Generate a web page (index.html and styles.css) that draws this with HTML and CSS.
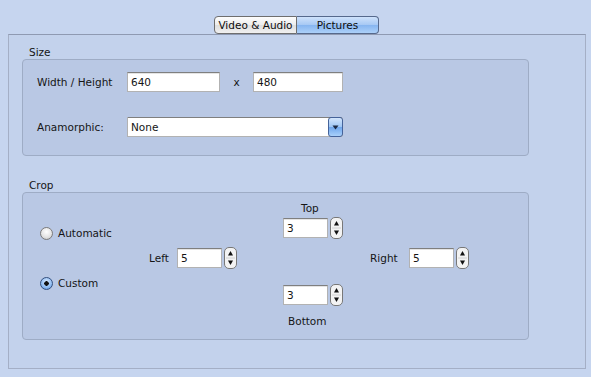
FILE: index.html
```html
<!DOCTYPE html>
<html lang="en">
<head>
    <meta charset="UTF-8">
    <title>Pictures</title>
    <link rel="stylesheet" href="styles.css">
</head>
<body>
    <div class="tabs">
        <span class="tab">Video &amp; Audio</span>
        <span class="tab active">Pictures</span>
    </div>

    <div class="panel">
        <div class="group-label">Size</div>
        <div class="group size">
            <div class="row">
                <span class="label">Width / Height</span>
                <input class="field width" type="text" value="640">
                <span class="times">x</span>
                <input class="field height" type="text" value="480">
            </div>
            <div class="row anamorphic">
                <span class="label">Anamorphic:</span>
                <div class="popup">
                    <span class="popup-text">None</span>
                    <span class="popup-btn">
                        <svg width="7" height="5" viewBox="0 0 7 5"><path d="M0.5 0.5 H6.5 L3.5 4.5 Z" fill="#1b2a45"/></svg>
                    </span>
                </div>
            </div>
        </div>

        <div class="group-label crop-label">Crop</div>
        <div class="group crop">
            <div class="radios">
                <div class="radio-row"><span class="radio"></span>Automatic</div>
                <div class="radio-row custom"><span class="radio on"></span>Custom</div>
            </div>

            <div class="sides">
                <div class="cell top">
                    <span class="side-label">Top</span>
                    <div class="spinner">
                        <input class="field num" type="text" value="3">
                        <svg class="stepper" width="13" height="22" viewBox="0 0 13 22">
                            <rect x="0.5" y="0.5" width="12" height="21" rx="4.5" fill="#f3f3f3" stroke="#787878"/>
                            <line x1="2" y1="11" x2="11" y2="11" stroke="#d2d2d2"/>
                            <path d="M6.5 4 L9 8.5 H4 Z" fill="#111"/>
                            <path d="M6.5 18 L9 13.5 H4 Z" fill="#111"/>
                        </svg>
                    </div>
                </div>

                <div class="cell left">
                    <span class="side-label">Left</span>
                    <div class="spinner">
                        <input class="field num" type="text" value="5">
                        <svg class="stepper" width="13" height="22" viewBox="0 0 13 22">
                            <rect x="0.5" y="0.5" width="12" height="21" rx="4.5" fill="#f3f3f3" stroke="#787878"/>
                            <line x1="2" y1="11" x2="11" y2="11" stroke="#d2d2d2"/>
                            <path d="M6.5 4 L9 8.5 H4 Z" fill="#111"/>
                            <path d="M6.5 18 L9 13.5 H4 Z" fill="#111"/>
                        </svg>
                    </div>
                </div>

                <div class="cell right">
                    <span class="side-label">Right</span>
                    <div class="spinner">
                        <input class="field num" type="text" value="5">
                        <svg class="stepper" width="13" height="22" viewBox="0 0 13 22">
                            <rect x="0.5" y="0.5" width="12" height="21" rx="4.5" fill="#f3f3f3" stroke="#787878"/>
                            <line x1="2" y1="11" x2="11" y2="11" stroke="#d2d2d2"/>
                            <path d="M6.5 4 L9 8.5 H4 Z" fill="#111"/>
                            <path d="M6.5 18 L9 13.5 H4 Z" fill="#111"/>
                        </svg>
                    </div>
                </div>

                <div class="cell bottom">
                    <div class="spinner">
                        <input class="field num" type="text" value="3">
                        <svg class="stepper" width="13" height="22" viewBox="0 0 13 22">
                            <rect x="0.5" y="0.5" width="12" height="21" rx="4.5" fill="#f3f3f3" stroke="#787878"/>
                            <line x1="2" y1="11" x2="11" y2="11" stroke="#d2d2d2"/>
                            <path d="M6.5 4 L9 8.5 H4 Z" fill="#111"/>
                            <path d="M6.5 18 L9 13.5 H4 Z" fill="#111"/>
                        </svg>
                    </div>
                    <span class="side-label">Bottom</span>
                </div>
            </div>
        </div>
    </div>
</body>
</html>
```

FILE: styles.css
```css
* {
    box-sizing: border-box;
}
body {
    margin: 0;
    background: #c6d5ef;
    font-family: "DejaVu Sans", sans-serif;
    font-size: 10.5px;
    color: #151515;
}
.tabs {
    display: flex;
    justify-content: center;
    padding-top: 16px;
    padding-left: 2px;
}
.tab {
    width: 83px;
    height: 18px;
    line-height: 16px;
    text-align: center;
    color: #0d0d0d;
    border: 1px solid #6e6e6e;
    border-radius: 4px 0 0 4px;
    background: linear-gradient(#fdfdfd, #ececec 50%, #dedede 51%, #f0f0f0);
}
.tab.active {
    width: 82px;
    border-color: #56698c;
    border-left: none;
    border-radius: 0 4px 4px 0;
    background: linear-gradient(#cfe2fb, #a6c8f4 50%, #86b5f0 51%, #acd0f9);
}
.panel {
    margin: 0 5px 0 8px;
    height: 335px;
    border: 1px solid #a4afc6;
    border-top-color: #8f9ab2;
    background: #c3d2ec;
    padding: 11px 0 0 13px;
}
.group-label {
    height: 13px;
    line-height: 13px;
    padding-left: 7px;
}
.crop-label {
    margin-top: 23px;
}
.group {
    width: 507px;
    border: 1px solid #9eacc5;
    border-radius: 4px;
    background: #b9c8e4;
}
.size {
    height: 97px;
    padding: 12px 0 0 14px;
}
.row {
    display: flex;
    align-items: center;
}
.anamorphic {
    margin-top: 25px;
}
.label {
    width: 90px;
}
.field {
    height: 20px;
    margin: 0;
    padding: 0 3px;
    font: inherit;
    color: #151515;
    background: #fff;
    border: 1px solid #b2b2b2;
    border-top-color: #7f7f7f;
    box-shadow: inset 0 1px 0 #e4e4e4;
    outline: none;
}
.field.width {
    width: 93px;
}
.times {
    width: 33px;
    text-align: center;
}
.field.height {
    width: 90px;
}
.popup {
    display: flex;
    align-items: center;
    width: 216px;
    height: 20px;
    background: #fff;
    border: 1px solid #b2b2b2;
    border-top-color: #7f7f7f;
    border-radius: 0 3px 3px 0;
}
.popup-text {
    flex: 1;
    padding-left: 3px;
}
.popup-btn {
    display: flex;
    align-items: center;
    justify-content: center;
    width: 15px;
    height: 20px;
    margin: -1px -1px -1px 0;
    border: 1px solid #45639a;
    border-radius: 3px;
    background: linear-gradient(#d3e5fc, #9ec6f4 50%, #6fa6ec 51%, #a9d0fa);
}
.crop {
    display: flex;
    height: 148px;
    padding: 8px 0 0 17px;
}
.radios {
    width: 109px;
    padding-top: 25px;
}
.radio-row {
    display: flex;
    align-items: center;
    gap: 5px;
    height: 14px;
}
.radio-row.custom {
    margin-top: 36px;
}
.radio {
    width: 13px;
    height: 13px;
    border: 1px solid #7b7b7b;
    border-radius: 50%;
    background: radial-gradient(circle at 50% 35%, #ffffff, #e2e2e2 60%, #bdbdbd);
}
.radio.on {
    border-color: #34507e;
    background: radial-gradient(circle, #111 0 2px, transparent 2.5px),
        radial-gradient(circle at 50% 35%, #d8e8fd, #8fbcf2 60%, #4f88d6);
}
.sides {
    display: grid;
    grid-template-columns: 134px 86px auto;
    align-content: start;
}
.cell {
    display: flex;
}
.cell.top {
    grid-column: 2;
    grid-row: 1;
    flex-direction: column;
}
.cell.top .side-label {
    height: 14px;
    line-height: 14px;
    padding-left: 18px;
    margin-bottom: 2px;
}
.cell.left {
    grid-column: 1;
    grid-row: 2;
    align-items: center;
    margin-top: 8px;
}
.cell.left .side-label {
    width: 28px;
}
.cell.right {
    grid-column: 3;
    grid-row: 2;
    align-items: center;
    margin-top: 8px;
}
.cell.right .side-label {
    width: 40px;
    padding-left: 1px;
}
.cell.bottom {
    grid-column: 2;
    grid-row: 3;
    flex-direction: column;
    margin-top: 15px;
}
.cell.bottom .side-label {
    height: 14px;
    line-height: 14px;
    padding-left: 5px;
    margin-top: 8px;
}
.spinner {
    display: flex;
    align-items: center;
    gap: 2px;
}
.field.num {
    width: 45px;
}
.stepper {
    display: block;
}
```
